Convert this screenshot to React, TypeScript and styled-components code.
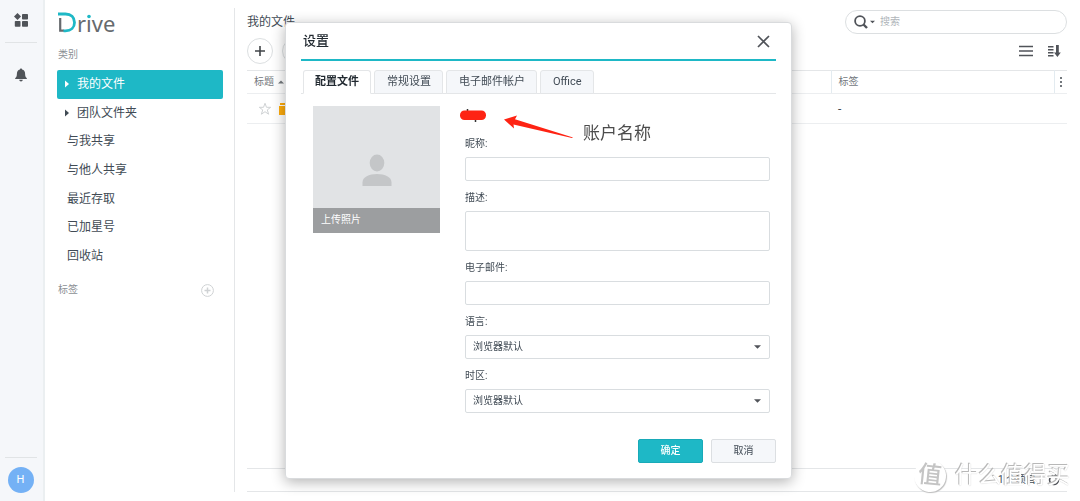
import React from "react";
import styled, { createGlobalStyle, css } from "styled-components";

const TEAL = "#1eb8c6";
const LINE = "#e4e6e8";

const GlobalStyle = createGlobalStyle`
  *, *::before, *::after { box-sizing: border-box; }
  body {
    margin: 0;
    background: #fff;
    color: #414b55;
    font-family: Roboto, "Noto Sans CJK SC", sans-serif;
    font-size: 12px;
    line-height: 16px;
  }
  button, input, select, textarea { font: inherit; color: inherit; }
  button { cursor: pointer; padding: 0; border: 0; background: none; }
  svg { display: block; flex: none; }
`;

const Page = styled.div`
  display: flex;
  min-height: 100vh;
`;

const Rail = styled.nav`
  display: flex;
  flex-direction: column;
  align-items: center;
  width: 45px;
  padding: 13px 2px 8px 0;
  background: #f5f7fa;
  border-right: 2px solid #ebeff1;
`;

const RailDivider = styled.hr`
  width: 32px;
  margin: 15px 0 25px;
  border: 0;
  border-top: 1px solid #e1e4e6;

  &:last-of-type { margin: auto 0 9px; }
`;

const RailButton = styled.button`
  display: flex;
  justify-content: center;
  width: 16px;
`;

const Avatar = styled.button`
  width: 26px;
  height: 26px;
  border-radius: 50%;
  background: #74b1f5;
  color: #fff;
  font-size: 11px;
`;

const Sidebar = styled.aside`
  display: flex;
  flex-direction: column;
  width: 190px;
  margin: 8px 0 9px;
  padding: 2px 11px 0 12px;
  border-right: 1px solid ${LINE};
`;

const SectionTitle = styled.div`
  display: flex;
  align-items: center;
  justify-content: space-between;
  height: 20px;
  padding: 0 9px 0 1px;
  color: #8c9095;
  font-size: 10px;
`;

const Nav = styled.ul`
  display: grid;
  grid-auto-rows: 1fr;
  height: 200px;
  margin: 5px 0 10px;
  padding: 0;
  list-style: none;
`;

const NavItem = styled.a<{ $active?: boolean; $branch?: boolean }>`
  display: flex;
  align-items: center;
  gap: 8px;
  height: 100%;
  padding-left: ${(p) => (p.$branch ? 8 : 10)}px;
  border-radius: 2px;
  color: ${(p) => (p.$active ? "#fff" : "#414b55")};
  background: ${(p) => (p.$active ? TEAL : "transparent")};
  text-decoration: none;
`;

const Main = styled.main`
  flex: 1;
  display: flex;
  flex-direction: column;
  min-width: 0;
  padding: 10px 13px 9px 12px;
`;

const TopBar = styled.header`
  display: flex;
  align-items: center;
  justify-content: space-between;
  height: 24px;
`;

const PageTitle = styled.h1`
  margin: 0;
  font-size: 12px;
  font-weight: 400;
`;

const SearchBox = styled.label`
  display: flex;
  align-items: center;
  gap: 2px;
  width: 222px;
  height: 24px;
  padding: 0 8px;
  border: 1px solid #dcdfe1;
  border-radius: 12px;
`;

const SearchInput = styled.input`
  flex: 1;
  min-width: 0;
  margin-left: 3px;
  padding: 0;
  border: 0;
  outline: 0;
  background: none;
  font-size: 10px;

  &::placeholder { color: #b0b5ba; opacity: 1; }
`;

const Toolbar = styled.div`
  display: flex;
  align-items: center;
  gap: 9px;
  height: 26px;
  margin: 4px 0 6px;
`;

const RoundButton = styled.button`
  display: flex;
  align-items: center;
  justify-content: center;
  width: 26px;
  height: 26px;
  border: 1px solid #dcdfe1;
  border-radius: 50%;
`;

const ViewTools = styled.div`
  display: flex;
  gap: 14px;
  margin-left: auto;
  padding-right: 6px;
`;

const FileTable = styled.table`
  width: 100%;
  table-layout: fixed;
  border-collapse: collapse;
  border-top: 1px solid ${LINE};

  th, td {
    padding: 0 0 0 7px;
    border-bottom: 1px solid #eceef0;
    text-align: left;
    font-weight: 400;
  }
  th { height: 23px; color: #73787d; font-size: 10px; }
  th + th { border-left: 1px solid #e3ebf0; }
  th:last-child { padding-left: 5px; }
  td { height: 30px; }
`;

const Inline = styled.div`
  display: flex;
  align-items: center;
  gap: 4px;
`;

const FileMarks = styled(Inline)`
  gap: 7px;
  padding-left: 4px;
`;

const StatusBar = styled.footer`
  display: flex;
  align-items: center;
  justify-content: flex-end;
  gap: 12px;
  height: 24px;
  margin-top: auto;
  padding-right: 7px;
  border-top: 1px solid ${LINE};
  border-bottom: 1px solid ${LINE};
  font-size: 10px;
`;

const Overlay = styled.div`
  position: fixed;
  inset: 0;
  display: flex;
  align-items: center;
  justify-content: center;
  padding-right: 3px;
`;

const Dialog = styled.section`
  position: relative;
  width: 507px;
  padding: 0 15px 15px;
  border: 1px solid #d9dbdd;
  border-radius: 4px;
  background: #fff;
  box-shadow: 0 3px 14px rgba(0, 0, 0, 0.3);
`;

const DialogHeader = styled.header`
  display: flex;
  align-items: center;
  justify-content: space-between;
  height: 38px;
  padding: 0 6px 0 2px;
  border-bottom: 2px solid ${TEAL};
`;

const DialogTitle = styled.h2`
  margin: 0;
  font-size: 13px;
  font-weight: 500;
  color: #222a31;
`;

const Tabs = styled.div`
  display: flex;
  gap: 3px;
  margin-top: 9px;
  padding-left: 2px;
  border-bottom: 1px solid ${LINE};
`;

const Tab = styled.button<{ $active?: boolean }>`
  height: 24px;
  margin-bottom: -1px;
  padding: 0 11px;
  border: 1px solid ${LINE};
  border-radius: 3px 3px 0 0;
  background: #f5f7fa;
  font-size: 11px;

  & + & { padding-left: 12px; }
  ${(p) =>
    p.$active &&
    css`
      border-bottom-color: #fff;
      background: #fff;
      color: #222a31;
      font-weight: 700;
    `}
`;

const Profile = styled.form`
  display: flex;
  gap: 20px;
  padding: 12px 6px 0 12px;
`;

const Photo = styled.button`
  display: flex;
  flex-direction: column;
  align-items: center;
  justify-content: space-between;
  width: 127px;
  height: 127px;
  padding-top: 48px;
  background: #e1e3e5;
`;

const PhotoCaption = styled.span`
  align-self: stretch;
  padding: 4px 8px 5px;
  background: #9c9ea0;
  color: #fff;
  font-size: 10px;
  text-align: left;
`;

const Fields = styled.div`
  flex: 1;
  display: flex;
  flex-direction: column;
  gap: 9px;
`;

const AccountName = styled.div`
  height: 21px;
  padding-top: 3px;
`;

const Field = styled.label`
  display: flex;
  flex-direction: column;
  gap: 5px;
  padding-left: 5px;
  font-size: 10px;
`;

const control = css`
  width: 100%;
  height: 24px;
  padding: 0 7px;
  border: 1px solid #d9dde0;
  border-radius: 2px;
  outline: 0;
  background: #fff;
`;

const TextInput = styled.input`
  ${control}
`;

const TextArea = styled.textarea`
  ${control}
  display: block;
  height: 40px;
  resize: none;
`;

const SelectWrap = styled.span`
  display: grid;
  align-items: center;

  > * { grid-area: 1 / 1; }
  > svg { justify-self: end; margin-right: 9px; pointer-events: none; }
`;

const Select = styled.select`
  ${control}
  appearance: none;
`;

const Actions = styled.footer`
  display: flex;
  justify-content: flex-end;
  gap: 8px;
  margin-top: 26px;
`;

const ActionButton = styled.button<{ $primary?: boolean }>`
  width: 65px;
  height: 24px;
  border: 1px solid ${(p) => (p.$primary ? "#18aab8" : "#dcdfe2")};
  border-radius: 2px;
  background: ${(p) => (p.$primary ? TEAL : "#f5f7fa")};
  color: ${(p) => (p.$primary ? "#fff" : "#414b55")};
  font-size: 10px;
  font-weight: ${(p) => (p.$primary ? 500 : 400)};
`;

const Callout = styled.div`
  position: absolute;
  top: 92px;
  left: 218px;
  display: flex;
  gap: 10px;
  color: #4c4c4c;
  font-size: 17px;
  line-height: 36px;
  pointer-events: none;
`;

const Watermark = styled.div`
  position: fixed;
  right: 10px;
  bottom: 8px;
  display: flex;
  align-items: center;
  gap: 9px;
  color: #fff;
  font-size: 23px;
  line-height: 34px;
  text-shadow: -1px -1px 0 #b8b8b8, 0 0 1px #c0c0c0;
  white-space: nowrap;
  pointer-events: none;
`;

const WatermarkSeal = styled.span`
  width: 32px;
  height: 32px;
  border-radius: 50%;
  box-shadow: 1px 1px 1px #bdbdbd;
  background: #fff;
  color: #c4c4c4;
  font-size: 24px;
  font-weight: 500;
  line-height: 30px;
  text-align: center;
  transform: rotate(6deg);
  text-shadow: none;
`;

const LogoMark = styled.svg`
  margin-bottom: 10px;
  overflow: visible;
`;

const Caret = ({ size = 7, color = "#505359" }: { size?: number; color?: string }) => (
  <svg width={size} height="4" viewBox="0 0 8 4" fill={color}>
    <path d="M0 0h8L4 4z" />
  </svg>
);

const Branch = () => (
  <svg width="4" height="8" viewBox="0 0 4 8" fill="currentColor">
    <path d="M0 0.5L4 4L0 7.5z" />
  </svg>
);

const Logo = () => (
  <LogoMark width="64" height="25" viewBox="0 0 64 25" role="img" aria-label="Drive">
    <path d="M3.200 8v12.700H7" fill="none" stroke="#666a6e" strokeWidth="2.200" />
    <path
      d="M1 4h7.500c5.500 0 9 3.500 9 8.500s-3.500 8.300-9 8.300H6.500"
      fill="none"
      stroke={TEAL}
      strokeWidth="2.800"
    />
    <text x="20" y="22" fontFamily="Noto Sans, sans-serif" fontSize="22" fill="#666a6e">
      rive
    </text>
    <rect x="29" y="3" width="6" height="6" fill="#fff" />
    <circle cx="32" cy="6.500" r="1.800" fill={TEAL} />
  </LogoMark>
);

const navItems = [
  { label: "我的文件", branch: true, active: true },
  { label: "团队文件夹", branch: true },
  { label: "与我共享" },
  { label: "与他人共享" },
  { label: "最近存取" },
  { label: "已加星号" },
  { label: "回收站" },
];

const tabs = ["配置文件", "常规设置", "电子邮件帐户", "Office"];

export default function App() {
  return (
    <>
      <GlobalStyle />
      <Page>
        <Rail>
          <RailButton aria-label="应用">
            <svg width="14" height="14" viewBox="0 0 14 14" fill="#505459">
              <path d="M3.500 0L7 3.500L3.500 7L0 3.500z" />
              <rect x="8" y="1" width="6" height="5.500" rx="0.800" />
              <rect x="0.800" y="8" width="5.700" height="5.700" rx="0.800" />
              <rect x="8" y="8" width="6" height="5.700" rx="0.800" />
            </svg>
          </RailButton>
          <RailDivider />
          <RailButton aria-label="通知">
            <svg width="12" height="14" viewBox="0 0 12 14" fill="#505459">
              <path d="M6 0.500c0.700 0 1.100 0.500 1.100 1.100c2 0.500 3 2.200 3 4.200c0 2.500 0.500 3.500 1.700 4.300v0.900H0.200v-0.900c1.200-0.800 1.700-1.800 1.700-4.300c0-2 1-3.700 3-4.200C4.900 1 5.300 0.500 6 0.500z" />
              <path d="M4.300 11.800h3.400c0 1-0.700 1.700-1.700 1.700s-1.700-0.700-1.700-1.700z" />
            </svg>
          </RailButton>
          <RailDivider />
          <Avatar>H</Avatar>
        </Rail>

        <Sidebar>
          <Logo />
          <SectionTitle>类别</SectionTitle>
          <Nav>
            {navItems.map((item) => (
              <li key={item.label}>
                <NavItem href="#" $active={item.active} $branch={item.branch}>
                  {item.branch && <Branch />}
                  {item.label}
                </NavItem>
              </li>
            ))}
          </Nav>
          <SectionTitle>
            标签
            <button aria-label="添加标签">
              <svg width="13" height="13" viewBox="0 0 13 13" fill="none" stroke="#cfd2d4">
                <circle cx="6.500" cy="6.500" r="5.900" />
                <path d="M3.500 6.500h6M6.500 3.500v6" strokeWidth="1.500" />
              </svg>
            </button>
          </SectionTitle>
        </Sidebar>

        <Main>
          <TopBar>
            <PageTitle>我的文件</PageTitle>
            <SearchBox>
              <svg width="14" height="14" viewBox="0 0 14 14" fill="none" stroke="#505359" strokeWidth="1.800">
                <circle cx="6" cy="6" r="4.900" />
                <path d="M9.500 9.500L13 13" strokeWidth="2.400" />
              </svg>
              <Caret size={5} />
              <SearchInput placeholder="搜索" aria-label="搜索" />
            </SearchBox>
          </TopBar>

          <Toolbar>
            <RoundButton aria-label="新建">
              <svg width="10" height="10" viewBox="0 0 10 10" stroke="#414549" strokeWidth="1.600">
                <path d="M0 5h10M5 0v10" />
              </svg>
            </RoundButton>
            <RoundButton aria-label="上传" />
            <ViewTools>
              <button aria-label="列表视图">
                <svg width="14" height="12" viewBox="0 0 14 12" stroke="#505359" strokeWidth="1.500">
                  <path d="M0 1.500h14M0 6h14M0 10.500h14" />
                </svg>
              </button>
              <button aria-label="排序">
                <svg width="14" height="12" viewBox="0 0 14 12" fill="#505359">
                  <path d="M1 1h5.500v1.500H1zM1 4h5.500v1.500H1zM1 7h5.500v1.500H1zM1 10h5.500v1.500H1z" />
                  <path d="M9 0h2.800v7.500h2L10.400 12L7 7.500h2z" />
                </svg>
              </button>
            </ViewTools>
          </Toolbar>

          <FileTable>
            <colgroup>
              <col />
              <col width="223" />
              <col width="13" />
            </colgroup>
            <thead>
              <tr>
                <th>
                  <Inline>
                    标题
                    <svg width="6" height="4" viewBox="0 0 8 4" fill="#73787d">
                      <path d="M0 4h8L4 0z" />
                    </svg>
                  </Inline>
                </th>
                <th>标签</th>
                <th aria-label="更多列">
                  <svg width="2" height="10" viewBox="0 0 2 10" fill="#73787d">
                    <path d="M0 0h2v2H0zM0 4h2v2H0zM0 8h2v2H0z" />
                  </svg>
                </th>
              </tr>
            </thead>
            <tbody>
              <tr>
                <td>
                  <FileMarks>
                    <svg width="14" height="14" viewBox="0 0 14 14" fill="none" stroke="#cfd2d4">
                      <path d="M7 1.300l1.500 4h4.200L9.300 7.900l1.300 4.300L7 9.700l-3.600 2.500l1.300-4.300L1.300 5.300h4.200z" />
                    </svg>
                    <svg width="14" height="12" viewBox="0 0 14 12" fill="#fdab0c">
                      <path d="M1 0h5v2H1zM0 3h14v9H0z" />
                    </svg>
                  </FileMarks>
                </td>
                <td>-</td>
                <td />
              </tr>
            </tbody>
          </FileTable>

          <StatusBar>
            1 个项目
            <button aria-label="刷新">
              <svg width="12" height="12" viewBox="0 0 12 12" fill="none" stroke="#505359" strokeWidth="1.600">
                <path d="M10.500 6A4.500 4.500 0 1 1 8.500 2.300" />
                <path d="M7 0l4 2.500L7.500 5z" fill="#505359" stroke="none" />
              </svg>
            </button>
          </StatusBar>
        </Main>
      </Page>

      <Overlay>
        <Dialog role="dialog" aria-labelledby="settings-title">
          <DialogHeader>
            <DialogTitle id="settings-title">设置</DialogTitle>
            <button aria-label="关闭">
              <svg width="13" height="13" viewBox="0 0 13 13" stroke="#505359" strokeWidth="1.700">
                <path d="M1 1l11 11M12 1L1 12" />
              </svg>
            </button>
          </DialogHeader>
          <Tabs role="tablist">
            {tabs.map((tab, i) => (
              <Tab key={tab} type="button" role="tab" aria-selected={i === 0} $active={i === 0}>
                {tab}
              </Tab>
            ))}
          </Tabs>
          <Profile id="profile" onSubmit={(e) => e.preventDefault()}>
            <Photo type="button">
              <svg width="30" height="33" viewBox="0 0 30 33" fill="#c4c6c8">
                <ellipse cx="15" cy="9" rx="7.300" ry="8.500" />
                <path d="M0.500 32v-3.500C0.500 23 7 20 15 20s14.500 3 14.500 8.500V32z" />
              </svg>
              <PhotoCaption>上传照片</PhotoCaption>
            </Photo>
            <Fields>
              <AccountName>
                <svg width="26" height="13" viewBox="0 0 26 13">
                  <path d="M7.500 0v3M15.500 10v3" stroke="#333" strokeWidth="1.500" />
                  <rect y="1.500" width="26" height="9.500" rx="4.500" fill="#fe2313" />
                </svg>
              </AccountName>
              <Field>
                昵称:
                <TextInput />
              </Field>
              <Field>
                描述:
                <TextArea />
              </Field>
              <Field>
                电子邮件:
                <TextInput type="email" />
              </Field>
              {["语言:", "时区:"].map((label) => (
                <Field key={label}>
                  {label}
                  <SelectWrap>
                    <Select>
                      <option>浏览器默认</option>
                    </Select>
                    <Caret />
                  </SelectWrap>
                </Field>
              ))}
            </Fields>
          </Profile>
          <Actions>
            <ActionButton form="profile" $primary>
              确定
            </ActionButton>
            <ActionButton type="button">取消</ActionButton>
          </Actions>
          <Callout>
            <svg width="69" height="24" viewBox="0 0 69 24" fill="#fe2313">
              <path d="M0 4.500L13 0.500L11 4.300L69 22.500L68 23L9.500 9.500L10 13.500z" />
            </svg>
            账户名称
          </Callout>
        </Dialog>
      </Overlay>

      <Watermark>
        <WatermarkSeal>值</WatermarkSeal>
        什么值得买
      </Watermark>
    </>
  );
}
